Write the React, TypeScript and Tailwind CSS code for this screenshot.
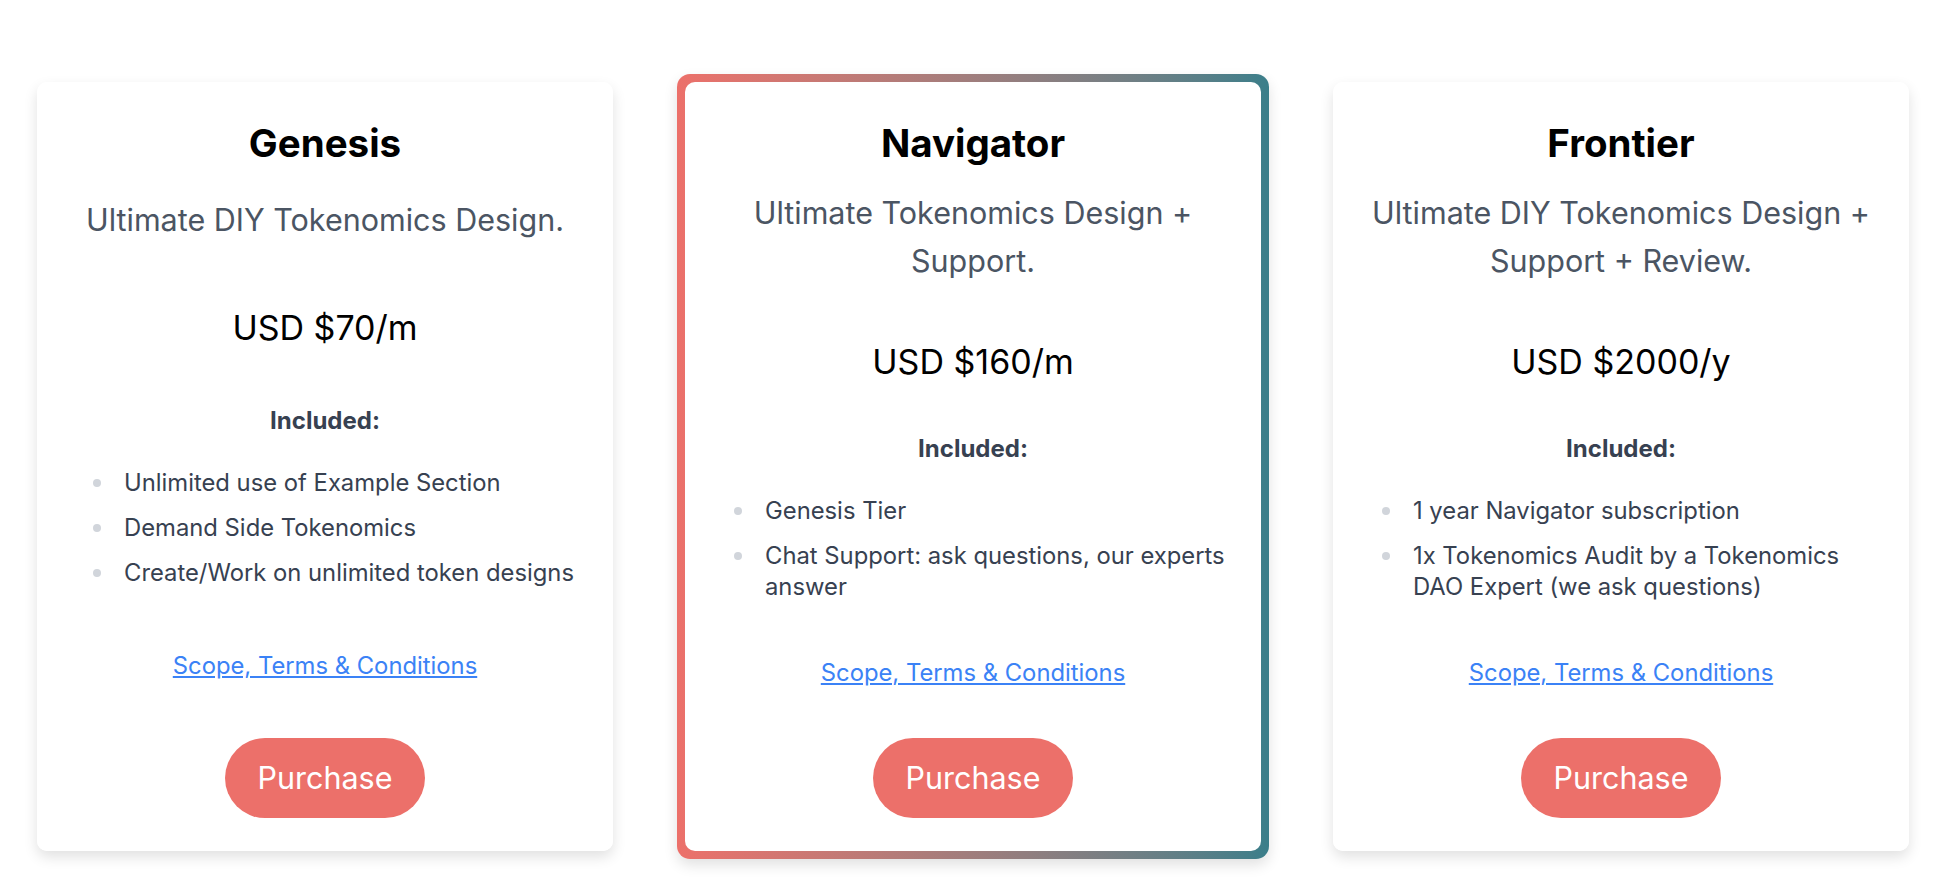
const plans = [
  {
    name: "Genesis",
    tagline: "Ultimate DIY Tokenomics Design.",
    price: "USD $70/m",
    items: [
      "Unlimited use of Example Section",
      "Demand Side Tokenomics",
      "Create/Work on unlimited token designs",
    ],
    featured: false,
  },
  {
    name: "Navigator",
    tagline: "Ultimate Tokenomics Design + Support.",
    price: "USD $160/m",
    items: ["Genesis Tier", "Chat Support: ask questions, our experts answer"],
    featured: true,
  },
  {
    name: "Frontier",
    tagline: "Ultimate DIY Tokenomics Design + Support + Review.",
    price: "USD $2000/y",
    items: [
      "1 year Navigator subscription",
      "1x Tokenomics Audit by a Tokenomics DAO Expert (we ask questions)",
    ],
    featured: false,
  },
];

type Plan = (typeof plans)[number];

function PlanCard({ plan }: { plan: Plan }) {
  return (
    <div className="flex h-full w-[576px] flex-col justify-between rounded-[10px] bg-white px-8 pt-[38px] pb-[33px] text-center">
      <h2 className="text-[38.5px] leading-[46px] font-bold text-black">
        {plan.name}
      </h2>

      <p className="mt-[23px] text-[30.5px] leading-[48px] text-[#4b5563]">
        {plan.tagline}
      </p>

      <div className="mt-[57px] text-[34px] leading-[40px] text-black">
        {plan.price}
      </div>

      <div className="mt-[51px]">
        <div className="text-[24px] leading-[31px] font-bold text-[#374151]">
          Included:
        </div>
        <ul className="mx-auto mt-[31px] flex w-fit flex-col gap-[14px] pl-[17px] text-left">
          {plan.items.map((item) => (
            <li
              key={item}
              className="flex items-start gap-[23px] text-[23.8px] leading-[31px] text-[#374151]"
            >
              <span className="mt-[12px] h-[8px] w-[8px] shrink-0 rounded-full bg-[#d1d5db]" />
              <span>{item}</span>
            </li>
          ))}
        </ul>
      </div>

      <div className="mt-[55px]">
        <a
          href="#"
          className="text-[23.8px] leading-[31px] text-[#3b82f6] underline"
        >
          Scope, Terms &amp; Conditions
        </a>
      </div>

      <div className="mt-[50px] flex justify-center">
        <button className="h-[80px] w-[200px] rounded-full bg-[#ec706a] text-[30.5px] text-white">
          Purchase
        </button>
      </div>
    </div>
  );
}

function App() {
  return (
    <div
      className="flex items-stretch justify-center gap-16 bg-white pt-[82px] pr-[4px] pb-[40px]"
      style={{ fontFamily: "Inter, 'Noto Sans', sans-serif" }}
    >
      {plans.map((plan) =>
        plan.featured ? (
          <div
            key={plan.name}
            className="-my-2 flex rounded-[13px] bg-gradient-to-r from-[#ec706a] to-[#3a7e8a] p-2 shadow-[0_6px_14px_rgba(0,0,0,0.12)]"
          >
            <PlanCard plan={plan} />
          </div>
        ) : (
          <div
            key={plan.name}
            className="flex rounded-[10px] shadow-[0_6px_14px_rgba(0,0,0,0.12)]"
          >
            <PlanCard plan={plan} />
          </div>
        )
      )}
    </div>
  );
}

export default App;
